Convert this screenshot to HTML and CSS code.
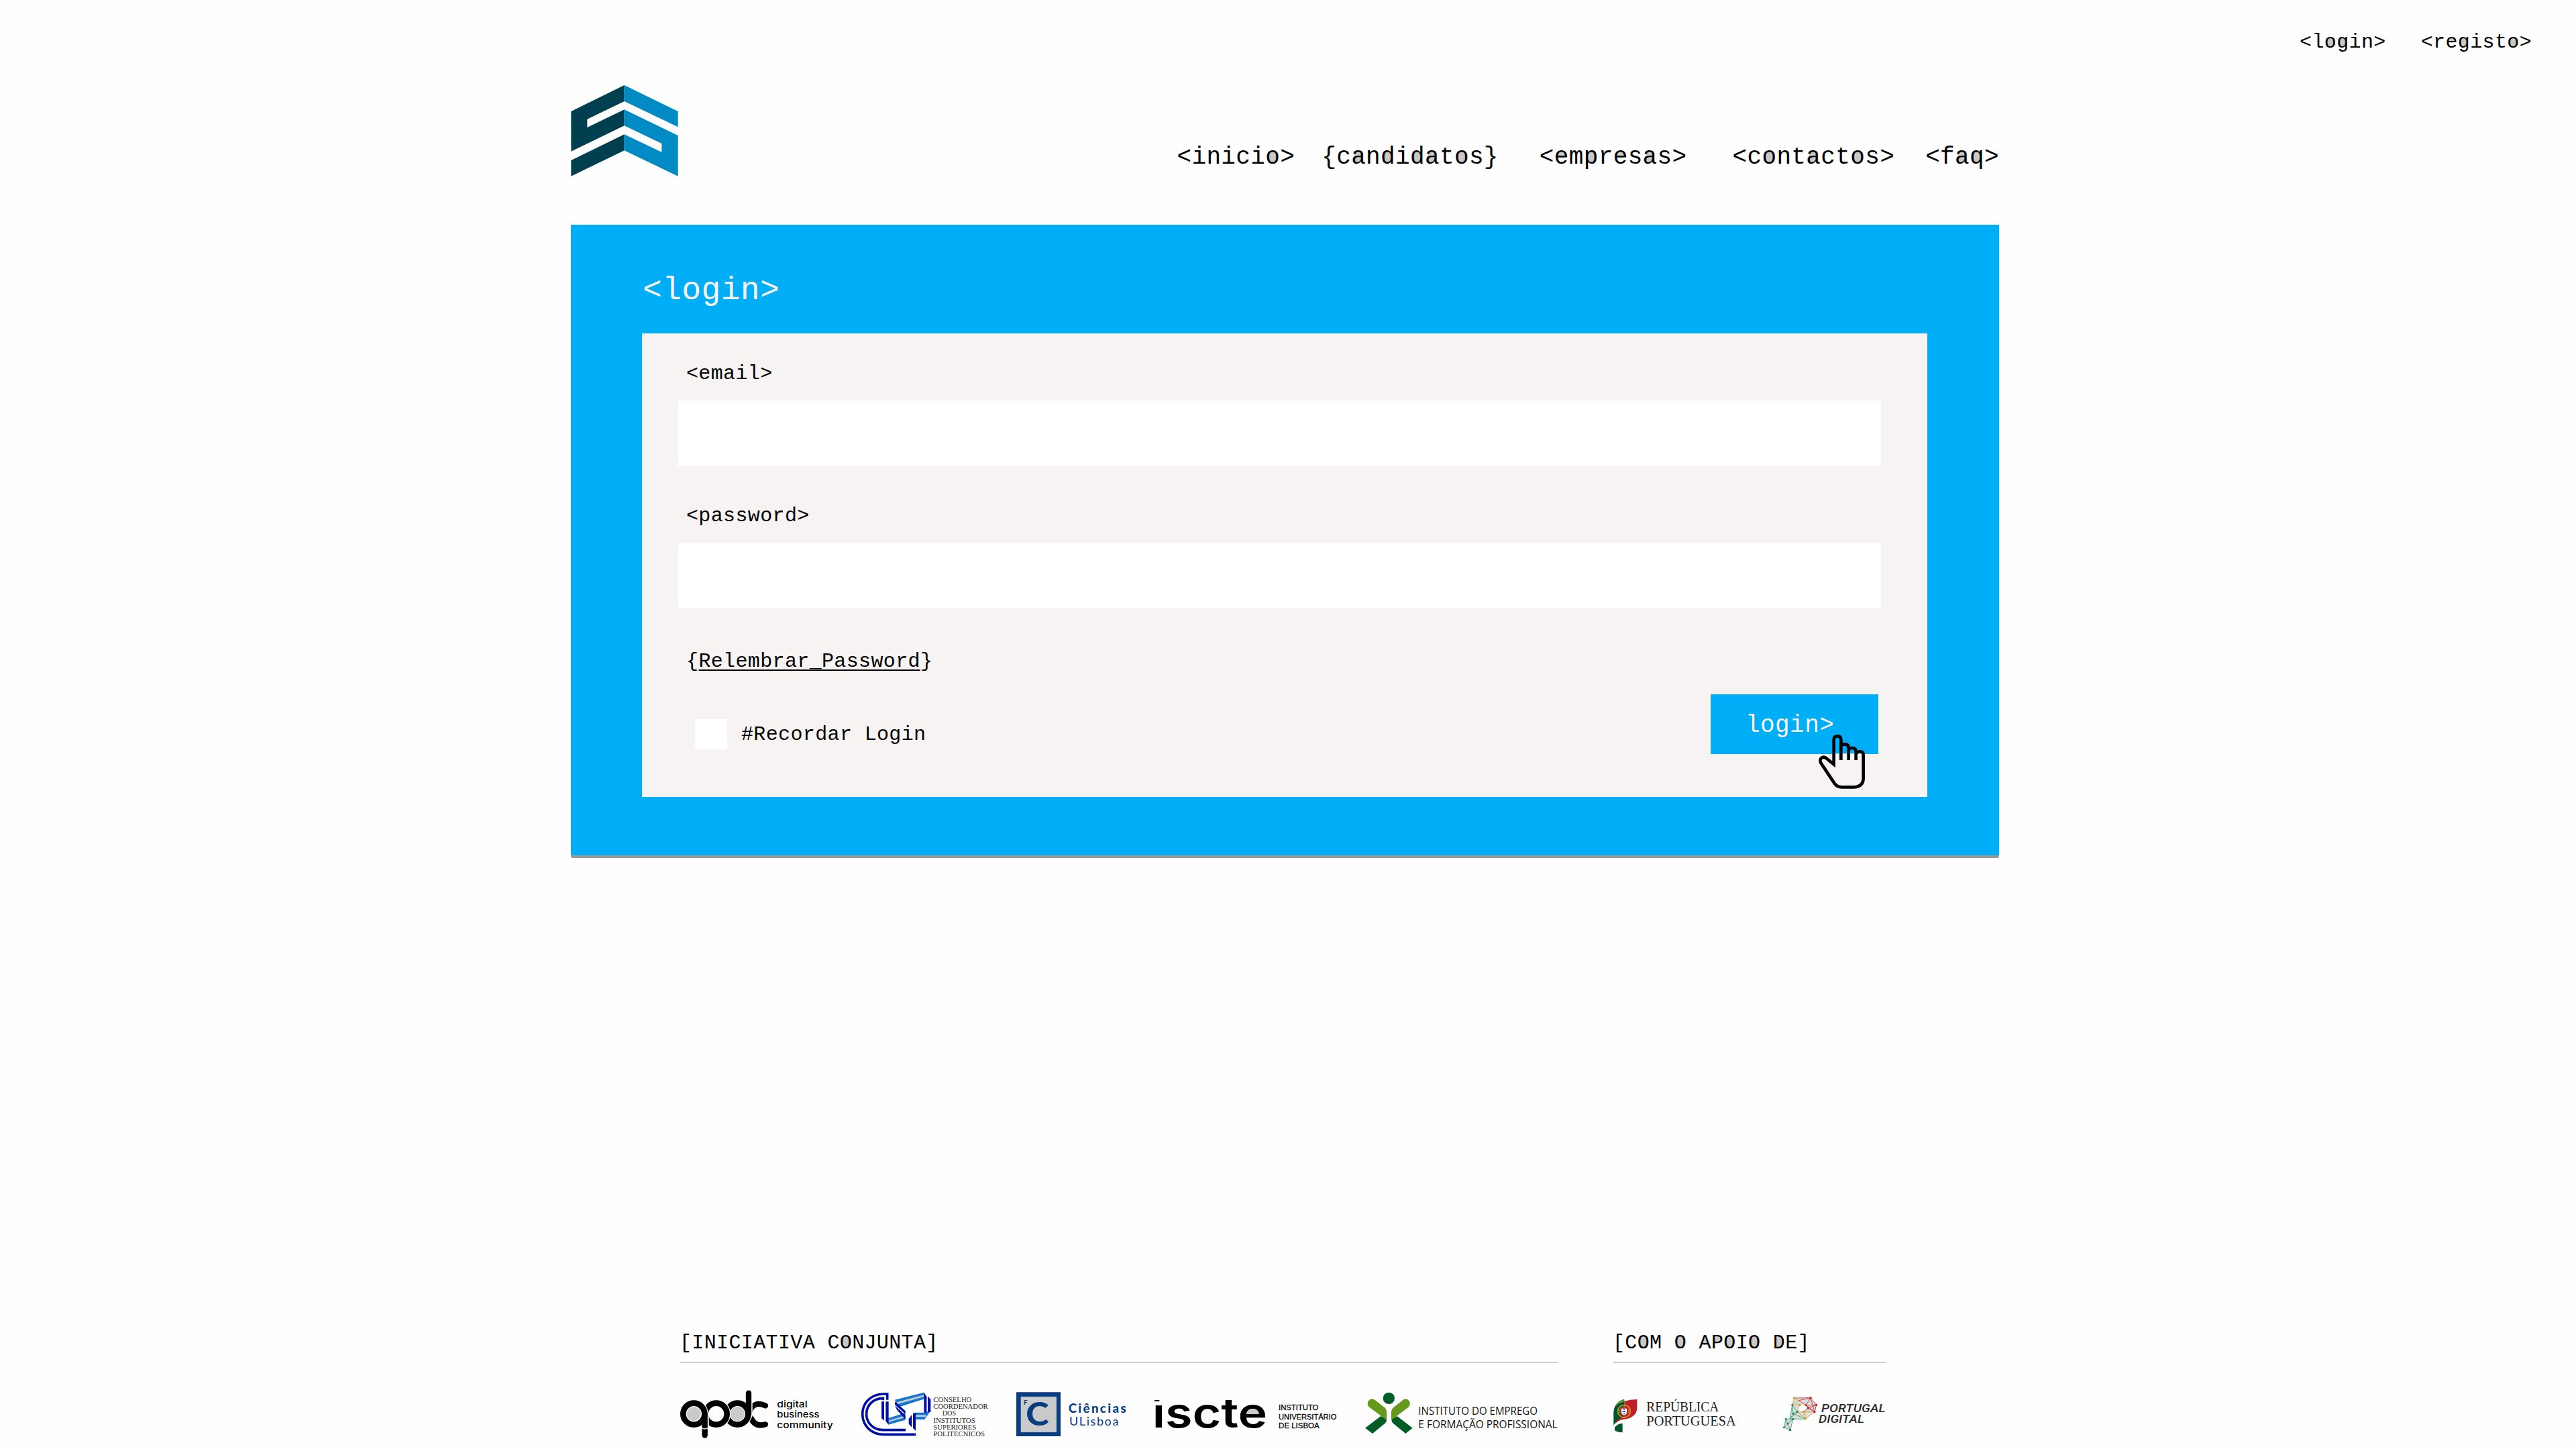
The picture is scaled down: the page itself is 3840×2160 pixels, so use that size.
FILE: index.html
```html
<!DOCTYPE html>
<html lang="pt">
<head>
<meta charset="utf-8">
<title>Login</title>
<link rel="stylesheet" href="styles.css">
</head>
<body>
<nav class="account">
  <a>&lt;l<i class="r">o</i><i class="r">g</i>in&gt;</a>
  <a>&lt;r<i class="e">e</i><i class="r">g</i>ist<i class="r">o</i>&gt;</a>
</nav>

<header class="header">
  <svg class="brand" viewBox="65 81 480 408">
    <path fill="#003f50" d="M66 198 304 81V153L138 233V270L304 190V262L66 377ZM66 417 304 301V373L66 488Z"/>
    <path fill="#008bc5" d="M304 81 544 198V268L304 153ZM304 190 544 306V488L304 373V301L471 380V342L304 262Z"/>
  </svg>
  <nav class="menu">
    <a>&lt;inici<i class="r">o</i>&gt;</a>
    <a>{c<i class="r">a</i>n<i class="r">d</i>i<i class="r">d</i><i class="r">a</i>t<i class="r">o</i>s}</a>
    <a>&lt;<i class="e">e</i>m<i class="r">p</i>r<i class="e">e</i>s<i class="r">a</i>s&gt;</a>
    <a>&lt;c<i class="r">o</i>nt<i class="r">a</i>ct<i class="r">o</i>s&gt;</a>
    <a>&lt;f<i class="r">a</i><i class="r">q</i>&gt;</a>
  </nav>
</header>

<main class="panel">
  <h1>&lt;login&gt;</h1>
  <form class="card">
    <label for="email">&lt;email&gt;</label>
    <input class="field" id="email" type="text">
    <label for="password">&lt;password&gt;</label>
    <input class="field" id="password" type="password">
    <p class="forgot">{<a>Relembrar_Password</a>}</p>
    <div class="actions">
      <div class="remember"><span class="box"></span><span>#Recordar Login</span></div>
      <button class="submit" type="button">login&gt;
        <svg class="cursor" viewBox="633 345 207 243">
          <path fill="#f7f3f2" d="M700 478V430H834V545Q834 580 796 580H735Q714 580 702 562L644 474Q634 452 651 447Q660 444 672 456Z"/>
          <path fill="none" stroke="#000" stroke-width="14" d="M733 459V368Q733 352 717 352Q701 352 701 368V478L670 453C654 438 632 452 643 472L703 562Q715 580 736 580H792Q833 577 833 540V436Q833 421 817 421Q807 421 801 429M733 396Q738 388 749 388Q767 388 767 406V459M767 412Q772 405 783 405Q800 405 800 422V459"/>
        </svg>
      </button>
    </div>
  </form>
</main>

<footer class="footer">
  <section class="joint">
    <h2>[INICI<i class="t">A</i>TIV<i class="t">A</i> C<i class="c">O</i>NJUNT<i class="t">A</i>]</h2>
    <div class="logos">
      <svg class="apdc" viewBox="42 300 690 240">
        <g fill="none" stroke-linecap="round">
          <path stroke="#000" stroke-width="25" d="M423 376Q372 354 353 400M358 430Q376 474 423 460"/>
          <circle cx="298" cy="413" r="48" stroke="#fefefe" stroke-width="32" fill="#cacaca"/>
          <path stroke="#fefefe" stroke-width="34" d="M348 320V420"/>
          <circle cx="298" cy="413" r="48" stroke="#000" stroke-width="26"/>
          <path stroke="#000" stroke-width="25" d="M348 320V414"/>
          <circle cx="203" cy="413" r="48" stroke="#fefefe" stroke-width="33" fill="#fefefe"/>
          <circle cx="203" cy="413" r="48" stroke="#000" stroke-width="26"/>
          <circle cx="103" cy="413" r="48" stroke="#fefefe" stroke-width="33" fill="#cacaca"/>
          <path stroke="#fefefe" stroke-width="36" d="M152 413V470"/>
          <circle cx="103" cy="413" r="48" stroke="#000" stroke-width="26"/>
          <path stroke="#000" stroke-width="25" d="M152 413V509"/>
          <path stroke="#fefefe" stroke-width="4" d="M138 477Q152 483 166 477"/>
        </g>
        <g font-family="Inter, sans-serif" font-weight="500" font-size="39">
          <text x="475" y="383" textLength="136" lengthAdjust="spacingAndGlyphs">digital</text>
          <text x="475" y="430" textLength="189" lengthAdjust="spacingAndGlyphs">business</text>
          <text x="475" y="477" textLength="250" lengthAdjust="spacingAndGlyphs">community</text>
        </g>
      </svg>
      <svg class="ccisp" viewBox="849 300 576 240">
        <g fill="none" stroke="#000fa8" stroke-width="11">
          <path d="M968 350V324H950C824 328 828 502 950 505H1095M949 352V343C850 345 850 482 949 485H1050"/>
        </g>
        <path fill="#1377d3" d="M973 432 1048 408V440L973 461ZM1002 350 1132 317 1146 342 1018 383ZM1095 407H1130L1162 400 1134 438H1095Z"/>
        <path fill="#cacaca" d="M973 443 1048 420V428L973 450ZM1010 361 1132 328V336L1016 369ZM1095 418H1140V426H1095Z"/>
        <path fill="#000fa8" d="M942 358H954V443L942 432ZM961 358H974V461L961 446ZM1002 358 1049 400V413L1002 372ZM1002 376 1049 419V437L1012 397ZM1132 317 1144 336V407H1132ZM1149 334 1162 348V405H1149ZM1083 412 1095 407V488L1083 477ZM1064 436 1078 416V473L1064 458Z"/>
        <g font-family="'Liberation Serif', serif" font-size="34" fill="#222">
          <text x="1174" y="360" textLength="171" lengthAdjust="spacingAndGlyphs">CONSELHO</text>
          <text x="1174" y="390" textLength="244" lengthAdjust="spacingAndGlyphs">COORDENADOR</text>
          <text x="1214" y="421" textLength="62" lengthAdjust="spacingAndGlyphs">DOS</text>
          <text x="1174" y="452" textLength="187" lengthAdjust="spacingAndGlyphs">INSTITUTOS</text>
          <text x="1174" y="483" textLength="192" lengthAdjust="spacingAndGlyphs">SUPERIORES</text>
          <text x="1174" y="514" textLength="230" lengthAdjust="spacingAndGlyphs">POLITECNICOS</text>
        </g>
      </svg>
      <svg class="ciencias" viewBox="75 60 495 240">
        <path fill="#083d82" d="M75 76H273V273H75Z"/>
        <path fill="#cacaca" stroke="#b3c4da" stroke-width="2" d="M96 97H254V254H96Z"/>
        <g fill="#083d82" font-family="Lato, sans-serif">
          <text x="108" y="133" font-size="30" font-weight="700">F</text>
          <text x="118" y="226" font-size="142" font-weight="900" textLength="103" lengthAdjust="spacingAndGlyphs">C</text>
          <text x="308" y="168" font-size="56" font-weight="900" textLength="258" lengthAdjust="spacing">Ciências</text>
          <text x="312" y="224" font-size="54" textLength="220" lengthAdjust="spacing">ULisboa</text>
        </g>
      </svg>
      <svg class="iscte" viewBox="680 60 832 240">
        <path d="M692 111H714V117H692Z"/>
        <path fill="#cacaca" d="M1105 175Q1110 151 1135 151Q1160 151 1166 175Z"/>
        <text x="682" y="235" font-family="Inter, sans-serif" font-weight="600" font-size="184" textLength="515" lengthAdjust="spacingAndGlyphs">ıscte</text>
        <g font-family="'Liberation Sans', sans-serif" font-size="34" stroke="#000" stroke-width=".8">
          <text x="1248" y="157" textLength="178" lengthAdjust="spacingAndGlyphs">INSTITUTO</text>
          <text x="1248" y="197" textLength="259" lengthAdjust="spacingAndGlyphs">UNIVERSITÁRIO</text>
          <text x="1248" y="237" textLength="182" lengthAdjust="spacingAndGlyphs">DE LISBOA</text>
        </g>
      </svg>
      <svg class="iefp" viewBox="75 60 864 240">
        <circle cx="181" cy="103" r="26" fill="#005d25"/>
        <path fill="#005d25" d="M75 236 145 183 171 196Q171 211 162 217L108 261ZM287 236 218 183 193 196Q193 211 202 217L256 261Z"/>
        <path fill="#65991b" d="M119 111 162 145Q171 153 171 166V201L92 142C75 121 99 96 119 111ZM244 111 201 145Q192 153 192 166V201L270 142C286 121 263 96 244 111Z"/>
        <g font-family="'Open Sans', sans-serif" font-size="48" fill="#111">
          <text x="313" y="177" textLength="533" lengthAdjust="spacingAndGlyphs">INSTITUTO DO EMPREGO</text>
          <text x="313" y="236" textLength="622" lengthAdjust="spacingAndGlyphs">E FORMAÇÃO PROFISSIONAL</text>
        </g>
      </svg>
    </div>
  </section>
  <section class="support">
    <h2>[C<i class="c">O</i>M <i class="c">O</i> <i class="t">A</i><i class="p">P</i><i class="c">O</i>I<i class="c">O</i> <i class="c">D</i>E]</h2>
    <div class="logos">
      <svg class="republica" viewBox="75 300 552 240">
        <path fill="#00572b" d="M122 348Q76 362 76 410V466Q88 440 124 432V350ZM81 473Q96 455 116 455V496Q92 496 81 487Z"/>
        <path fill="#5a9c3a" d="M122 348Q92 355 83 382Q100 362 122 360Z"/>
        <path fill="#bd2026" d="M124 356Q150 348 181 348V388Q178 430 124 438Q96 444 80 464Q92 430 124 424Z"/>
        <path fill="none" stroke="#fefefe" stroke-width="5" d="M77 472Q86 444 128 439"/>
        <circle cx="123" cy="401" r="28" fill="none" stroke="#d5a928" stroke-width="4"/>
        <path fill="none" stroke="#d5a928" stroke-width="3" d="M96 392Q123 416 150 392M96 410Q123 386 150 410M123 373V429"/>
        <path fill="#fefefe" stroke="#c32b30" stroke-width="6" d="M108 386H138V406Q136 420 123 421Q110 420 108 406Z"/>
        <path fill="none" stroke="#26458c" stroke-width="5" stroke-dasharray="5 4" d="M123 391V416M115 402H132"/>
        <g font-family="'Liberation Serif', serif" font-size="61" fill="#222">
          <text x="223" y="402" textLength="324" lengthAdjust="spacingAndGlyphs">REPÚBLICA</text>
          <text x="223" y="465" textLength="400" lengthAdjust="spacingAndGlyphs">PORTUGUESA</text>
        </g>
      </svg>
      <svg class="portugal" viewBox="834 300 462 240">
        <path fill="#dcdcdc" d="M884 342 957 341 983 373 975 404 935 434 879 436 866 485 838 474 847 436 864 436Z"/>
        <path fill="#fefefe" d="M908 373 936 374 946 387 926 404 898 404Z"/>
        <g fill="none" stroke-width="2.5">
          <path stroke="#c22a35" d="M884 342 957 341 983 373 975 404 946 387 983 373 936 374 957 341 975 404M904 353 957 341M904 353 936 374 946 387 926 404M936 374 975 404"/>
          <path stroke="#cf9b22" d="M884 342 904 353 875 373 908 373 898 404 926 404 935 434 975 404M926 404 975 404M884 342 875 373M898 404 935 434"/>
          <path stroke="#2e9b68" d="M875 373 898 404 879 412 864 436 898 404M875 373 864 436H935L879 412 875 373M847 436H879L866 485 838 474 847 436 855 457 879 436M838 474 855 457 866 485"/>
        </g>
        <g fill="#b3202c"><circle cx="957" cy="341" r="5"/><circle cx="983" cy="373" r="5"/><circle cx="975" cy="404" r="5"/><circle cx="946" cy="387" r="5"/><circle cx="936" cy="374" r="4"/></g>
        <g fill="#c79a17"><circle cx="884" cy="342" r="5"/><circle cx="908" cy="373" r="5"/><circle cx="926" cy="404" r="5"/><circle cx="935" cy="434" r="5"/></g>
        <g fill="#12704e"><circle cx="875" cy="373" r="4"/><circle cx="898" cy="404" r="4"/><circle cx="879" cy="412" r="4"/><circle cx="847" cy="436" r="4"/><circle cx="879" cy="436" r="4"/><circle cx="855" cy="457" r="4"/><circle cx="866" cy="485" r="5"/><circle cx="838" cy="474" r="4"/></g>
        <g font-family="Roboto, sans-serif" font-size="51" font-weight="500" font-style="italic" fill="#2c2c2c">
          <text x="1005" y="404" textLength="287" lengthAdjust="spacingAndGlyphs">PORTUGAL</text>
          <text x="993" y="453" textLength="204" lengthAdjust="spacingAndGlyphs">DIGITAL</text>
        </g>
      </svg>
    </div>
  </section>
</footer>
</body>
</html>
```

FILE: styles.css
```css
* { box-sizing: border-box; }

body {
  margin: 0;
  height: 2160px;
  overflow: hidden;
  background: #fefefe;
  color: #000;
  font: 30px/40px "Liberation Mono", monospace;
  letter-spacing: 0.012em;
}

h1, h2, p { margin: 0; font-weight: 400; }

svg { display: block; overflow: visible; letter-spacing: 0; }

/* Letters with shaded counters */
i {
  font-style: normal;
  background: radial-gradient(closest-side, #c9c8c8 94%, transparent) no-repeat;
}
.r { background-size: 0.38em 0.48em; background-position: 48% 50%; }
.e { background-size: 0.38em 0.26em; background-position: 48% 40%; }
.c { background-size: 0.42em 0.6em; background-position: 48% 42%; }
.t { background-size: 0.26em 0.34em; background-position: 48% 40%; }
.p { background-size: 0.36em 0.3em; background-position: 50% 30%; }

.account {
  display: flex;
  justify-content: flex-end;
  gap: 52px;
  height: 127px;
  padding: 43px 66px 0 0;
}

.header {
  display: flex;
  justify-content: space-between;
  width: 2129px;
  height: 208px;
  margin-left: 851px;
}
.brand { width: 160px; height: 136px; }
.menu {
  display: flex;
  padding-top: 84px;
  font-size: 36px;
  line-height: 48px;
}
.menu a { margin-left: 40px; }
.menu a:nth-child(3) { margin-left: 61px; }
.menu a:nth-child(4) { margin-left: 68px; }
.menu a:nth-child(5) { margin-left: 46px; }

.panel {
  width: 2129px;
  height: 940px;
  margin-left: 851px;
  padding: 64px 107px 0 106px;
  background: #00aef8;
  border-radius: 0 0 3px 3px;
  box-shadow: 0 4px 0 -1px #999, 0 4px 0 0 #999;
}
.panel h1 {
  height: 98px;
  padding-left: 1px;
  color: #f7f3f2;
  font-size: 48px;
  line-height: 68px;
}

.card {
  display: flex;
  flex-direction: column;
  height: 691px;
  padding: 40px 73px 0 54px;
  background: #f7f3f2;
}
.card label { height: 60px; padding-left: 12px; }
.field {
  width: 1793px;
  height: 98px;
  margin-bottom: 54px;
  padding: 0 24px;
  border: 0;
  outline: 0;
  background: #fff;
  font: inherit;
}
.forgot { margin-top: 5px; padding-left: 12px; }
.forgot a {
  text-decoration: underline;
  text-decoration-thickness: 2px;
  text-underline-offset: 4px;
  text-decoration-skip-ink: none;
}
.actions {
  display: flex;
  justify-content: space-between;
  margin-top: 29px;
}
.remember {
  display: flex;
  align-items: center;
  height: 45px;
  margin: 37px 0 0 25px;
  gap: 21px;
}
.box { width: 48px; height: 45px; background: #fff; }
.submit {
  position: relative;
  width: 250px;
  height: 89px;
  padding: 4px 0 0 52px;
  border: 0;
  background: #00aef8;
  color: #f7f3f2;
  font: 36px/48px "Liberation Mono", monospace;
  letter-spacing: 0.012em;
  text-align: left;
}
.cursor {
  position: absolute;
  left: 161px;
  top: 60px;
  width: 69px;
  height: 81px;
}

.footer {
  display: flex;
  gap: 83px;
  margin: 707px 0 0 1014px;
}
.joint { width: 1308px; }
.support { width: 406px; }
.footer h2 {
  height: 50px;
  border-bottom: 2px solid #c6ced6;
  font-size: 30px;
  line-height: 41px;
  text-indent: -1px;
}
.logos { display: flex; margin-top: 38px; }
.logos svg { flex: none; height: 80px; }
.apdc { width: 230px; }
.ccisp { width: 192px; margin-left: 39px; }
.ciencias { width: 165px; margin-left: 40px; }
.iscte { width: 277px; margin-left: 37px; }
.iefp { width: 288px; margin-left: 41px; }
.republica { width: 184px; }
.portugal { width: 154px; margin-left: 69px; }
```
